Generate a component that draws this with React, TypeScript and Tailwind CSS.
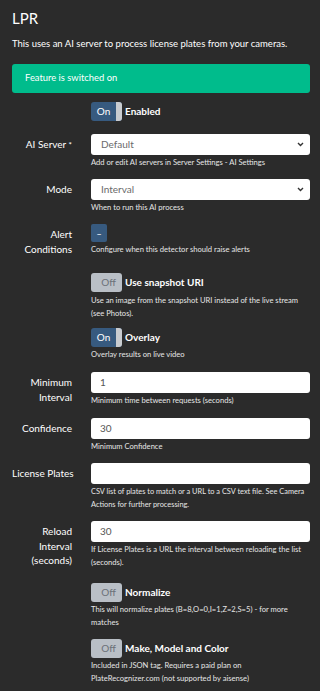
import type { ReactNode } from 'react';

function Toggle({ on, label }: { on: boolean; label: string }) {
  return (
    <div className="flex h-[19px] items-center">
      {on ? (
        <div className="flex h-[19px] w-[31px] overflow-hidden rounded-[3px] bg-[#375a7f]">
          <span className="flex flex-1 items-center justify-center text-[10px] text-white">On</span>
          <span className="w-[6px] bg-[#c9ccd0]" />
        </div>
      ) : (
        <div className="flex h-[19px] w-[31px] items-center justify-center rounded-[3px] bg-[#b9bfc6] pl-[4px] text-[10px] text-[#6b7178]">
          Off
        </div>
      )}
      <span className="ml-[3px] text-[10px] font-bold text-white">{label}</span>
    </div>
  );
}

function Help({ children, size = 'text-[7.6px]' }: { children: ReactNode; size?: string }) {
  return <p className={`mt-[1px] leading-[13px] text-[#e6e6e6] ${size}`}>{children}</p>;
}

function Row({
  label,
  children,
  className = 'mb-[10px]',
}: {
  label?: ReactNode;
  children: ReactNode;
  className?: string;
}) {
  return (
    <div className={`flex ${className}`}>
      <div className="w-[60px] shrink-0 pt-[3px] text-right text-[10px] leading-[14.5px] text-white">
        {label}
      </div>
      <div className="ml-[19px] min-w-0 flex-1">{children}</div>
    </div>
  );
}

function Select({ value }: { value: string }) {
  return (
    <div className="flex h-[21px] items-center justify-between rounded-[3px] bg-white pl-[10px] pr-[6px] text-[10px] text-[#6a6a6a]">
      <span>{value}</span>
      <svg width="7" height="5" viewBox="0 0 7 5" fill="none">
        <path d="M1 1l2.5 2.5L6 1" stroke="#333" strokeWidth="1.4" />
      </svg>
    </div>
  );
}

function Input({ value = '' }: { value?: string }) {
  return (
    <div className="flex h-[21px] items-center rounded-[3px] bg-white px-[9px] text-[10px] text-[#555]">
      {value}
    </div>
  );
}

export default function App() {
  return (
    <div
      className="min-h-[691px] w-[320px] bg-[#2b2b2b] pl-[12px] pr-[10px] pt-[9px]"
      style={{ fontFamily: 'Lato, "Open Sans", sans-serif' }}
    >
      <h1 className="text-[15px] leading-[18px] text-white">LPR</h1>
      <p className="mt-[10px] text-[9.5px] leading-[14px] text-white">
        This uses an AI server to process license plates from your cameras.
      </p>
      <div className="mt-[13px] flex h-[29px] items-center rounded-[3px] bg-[#00bc8c] pl-[13px] text-[9.4px] text-white">
        Feature is switched on
      </div>

      <div className="mt-[9px]">
        <Row className="mb-[13px]">
          <Toggle on label="Enabled" />
        </Row>

        <Row
          label={
            <span>
              AI Server <span className="text-[8px]">*</span>
            </span>
          }
        >
          <Select value="Default" />
          <Help>Add or edit AI servers in Server Settings - AI Settings</Help>
        </Row>

        <Row label="Mode">
          <Select value="Interval" />
          <Help>When to run this AI process</Help>
        </Row>

        <Row label="Alert Conditions" className="mb-[17px]">
          <div className="flex h-[18px] w-[16px] items-center justify-center rounded-[2px] bg-[#375a7f] text-[9px] leading-none text-white">
            –
          </div>
          <Help>Configure when this detector should raise alerts</Help>
        </Row>

        <Row className="mb-[8px]">
          <Toggle on={false} label="Use snapshot URI" />
          <p className="mt-[1px] pt-[1px] text-[7.6px] leading-[13px] text-[#e6e6e6]">
            Use an image from the snapshot URI instead of the live stream (see Photos).
          </p>
        </Row>

        <Row className="mb-[11px]">
          <Toggle on label="Overlay" />
          <Help>Overlay results on live video</Help>
        </Row>

        <Row label="Minimum Interval" className="mb-[11px]">
          <Input value="1" />
          <Help>Minimum time between requests (seconds)</Help>
        </Row>

        <Row label="Confidence">
          <Input value="30" />
          <Help>Minimum Confidence</Help>
        </Row>

        <Row label={<span className="whitespace-nowrap">License Plates</span>}>
          <Input />
          <Help size="text-[7.4px]">
            CSV list of plates to match or a URL to a CSV text file. See Camera Actions for further processing.
          </Help>
        </Row>

        <Row label="Reload Interval (seconds)" className="mb-[14px]">
          <Input value="30" />
          <Help>If License Plates is a URL the interval between reloading the list (seconds).</Help>
        </Row>

        <Row className="mb-[10px]">
          <Toggle on={false} label="Normalize" />
          <Help>This will normalize plates (B=8,O=0,I=1,Z=2,S=5) - for more matches</Help>
        </Row>

        <Row className="mb-0">
          <Toggle on={false} label="Make, Model and Color" />
          <Help>Included in JSON tag. Requires a paid plan on PlateRecognizer.com (not supported by aisense)</Help>
        </Row>
      </div>
    </div>
  );
}
